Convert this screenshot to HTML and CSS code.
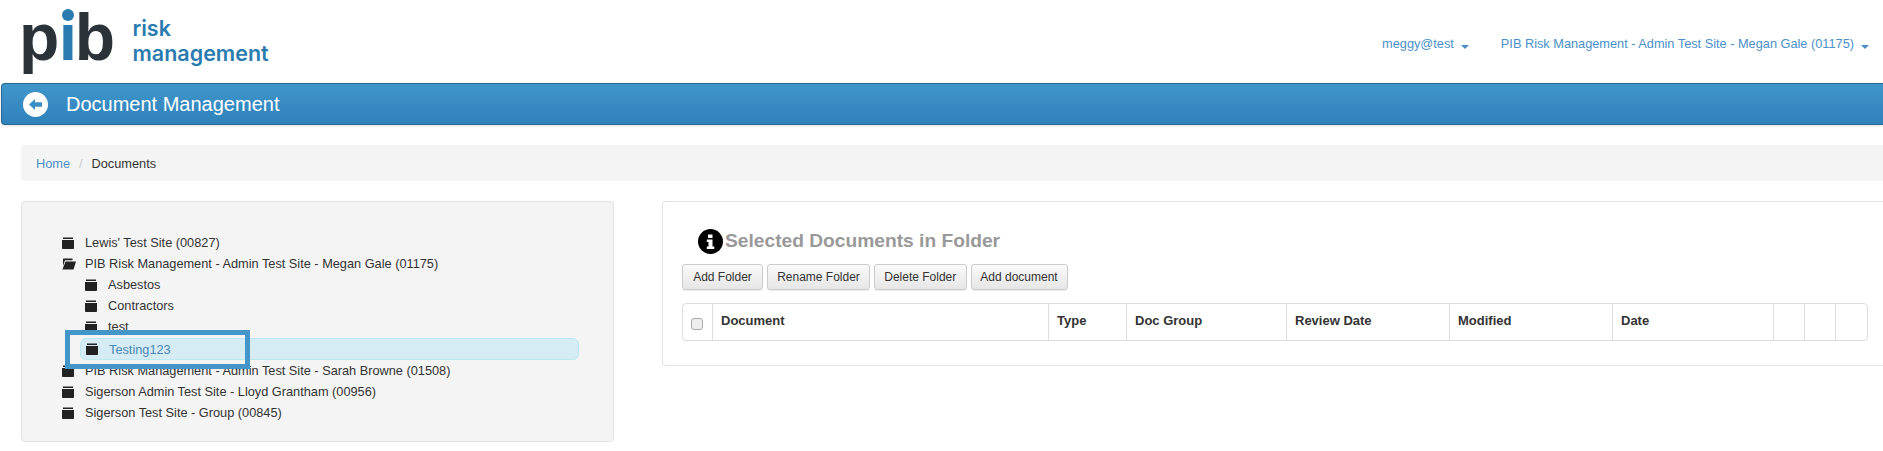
FILE: index.html
```html
<!DOCTYPE html>
<html lang="en">
<head>
<meta charset="utf-8">
<title>Document Management</title>
<link rel="stylesheet" href="styles.css">
</head>
<body>
<svg class="defs" width="0" height="0" aria-hidden="true">
  <symbol id="folder" viewBox="0 0 12 12"><path d="M1 0.5h10v1.6H1zM0 3h12v8.2a.8.8 0 0 1-.8.8H.8a.8.8 0 0 1-.8-.8z"/></symbol>
  <symbol id="folder-open" viewBox="0 0 14 12"><path d="M1.5 0.5h9v1.8H3L1 8V1z M3.6 3.4H14L11.5 11.5H0.4z"/></symbol>
</svg>
<header class="top">
  <div class="logo">
    <div class="logo-mark"><span class="logo-p">p</span><span class="logo-i">i</span><span>b</span></div>
    <div class="logo-text">risk<br>management</div>
  </div>
  <nav class="user-nav">
    <a class="nav-link">meggy@test<i class="caret"></i></a>
    <a class="nav-link">PIB Risk Management - Admin Test Site - Megan Gale (01175)<i class="caret"></i></a>
  </nav>
</header>
<div class="titlebar">
  <svg class="back" viewBox="0 0 25 25"><circle cx="12.5" cy="12.5" r="12.5" fill="#fff"/><path d="M6 12.5l6-5.5v3.2h7v4.6h-7V18z" fill="#3a8fc6"/></svg>
  <h1>Document Management</h1>
</div>
<ol class="crumbs">
  <li><a>Home</a></li>
  <li class="sep">/</li>
  <li>Documents</li>
</ol>
<main class="content">
  <section class="tree-panel">
    <ul class="tree">
      <li class="row"><svg class="ic"><use href="#folder"/></svg>Lewis' Test Site (00827)</li>
      <li class="row"><svg class="ic ic-open"><use href="#folder-open"/></svg>PIB Risk Management - Admin Test Site - Megan Gale (01175)</li>
      <li class="row child"><svg class="ic"><use href="#folder"/></svg>Asbestos</li>
      <li class="row child"><svg class="ic"><use href="#folder"/></svg>Contractors</li>
      <li class="row child"><svg class="ic"><use href="#folder"/></svg>test</li>
      <li class="row selected"><svg class="ic"><use href="#folder"/></svg>Testing123<span class="callout"></span></li>
      <li class="row"><svg class="ic"><use href="#folder"/></svg>PIB Risk Management - Admin Test Site - Sarah Browne (01508)</li>
      <li class="row"><svg class="ic"><use href="#folder"/></svg>Sigerson Admin Test Site - Lloyd Grantham (00956)</li>
      <li class="row"><svg class="ic"><use href="#folder"/></svg>Sigerson Test Site - Group (00845)</li>
    </ul>
  </section>
  <section class="docs-panel">
    <h2 class="docs-title">
      <svg class="info" viewBox="0 0 25 25"><circle cx="12.5" cy="12.5" r="12.5" fill="#000"/><path d="M10 5.5h4.5v3.5H10zM8.8 10.5h5.7v7h1.8v2.5H8.8v-2.5h1.7v-4.5H8.8z" fill="#fff"/></svg>
      Selected Documents in Folder
    </h2>
    <div class="actions">
      <button class="btn b1">Add Folder</button>
      <button class="btn b2">Rename Folder</button>
      <button class="btn b3">Delete Folder</button>
      <button class="btn b4">Add document</button>
    </div>
    <div class="table">
      <div class="cell c-check"><span class="check"></span></div>
      <div class="cell c-doc">Document</div>
      <div class="cell c-type">Type</div>
      <div class="cell c-group">Doc Group</div>
      <div class="cell c-review">Review Date</div>
      <div class="cell c-mod">Modified</div>
      <div class="cell c-date">Date</div>
      <div class="cell c-x"></div>
      <div class="cell c-x"></div>
      <div class="cell c-x"></div>
    </div>
  </section>
</main>
</body>
</html>
```
FILE: styles.css
```css
* { box-sizing: border-box; }
html, body { margin: 0; padding: 0; height: 451px; overflow: hidden; background: #fff; }
body { font-family: "Liberation Sans", Arial, sans-serif; font-size: 12.75px; color: #333; }
.defs { position: absolute; }

.top { height: 83px; display: flex; justify-content: space-between; }
.logo { display: flex; padding-left: 19px; }
.logo-mark { font-weight: 700; font-size: 66px; line-height: 74px; letter-spacing: -1.5px; color: #2b3338; height: 74px; }
.logo-p { letter-spacing: -0.5px; }
.logo-i { position: relative; letter-spacing: -2.5px; color: #2a7bb0; }
.logo-i::after { content: ""; position: absolute; left: 3.2px; top: 8.5px; width: 12px; height: 12px; border-radius: 50%; background: #2a7bb0; }
.logo-text { font-family: Inter, sans-serif; font-weight: 600; font-size: 21.5px; line-height: 25px; color: #2a7bb0; padding: 16px 0 0 19px; }
.user-nav { display: flex; gap: 32px; padding: 36px 14px 0 0; }
.nav-link { color: #4a90c8; }
.caret { display: inline-block; width: 0; height: 0; margin-left: 7px; border-top: 4px solid #4a90c8; border-left: 4px solid transparent; border-right: 4px solid transparent; vertical-align: -1px; }

.titlebar { height: 42px; margin-left: 1px; display: flex; align-items: center; padding-left: 21px; gap: 18px; border: 1px solid #2a6a92; border-right: 0; border-radius: 4px 0 0 4px; background: linear-gradient(#4096cb, #2f82ba); box-shadow: 0 1px 3px rgba(0,0,0,.12); }
.back { width: 25px; height: 25px; }
.titlebar h1 { margin: 0; font-size: 20px; font-weight: 400; color: #fff; }

.crumbs { list-style: none; height: 36px; margin: 20px 0 0 21px; padding: 0 0 0 15px; display: flex; align-items: center; gap: 9px; background: #f4f4f4; border-radius: 4px 0 0 4px; color: #333; }
.crumbs a { color: #4a90c8; }
.sep { color: #ccc; }

.content { display: flex; margin: 20px 0 0 21px; gap: 48px; align-items: flex-start; }
.tree-panel { width: 593px; height: 241px; padding: 30px 0 0 33px; background: #f4f4f4; border: 1px solid #e3e3e3; border-radius: 4px; }
.tree { list-style: none; margin: 0; padding: 0; width: 525px; }
.row { height: 21px; line-height: 21px; padding-left: 7px; display: flex; align-items: center; color: #333; white-space: nowrap; }
.child { padding-left: 30px; }
.ic { width: 12px; height: 12px; margin-right: 11px; fill: #222; flex: none; }
.ic-open { width: 14px; margin-right: 9px; }
.selected { position: relative; height: 22px; margin: 1px 0 0 25px; padding-left: 5px; width: 499px; background: #d6ecf5; border: 1px solid #bce8f1; border-radius: 6px; color: #4a87b5; }
.callout { position: absolute; left: -16px; top: -9px; width: 185px; height: 39px; border: 5px solid #4496c9; }

.docs-panel { flex: 1; height: 165px; padding: 23px 0 0 19px; background: #fff; border: 1px solid #e3e3e3; border-right: 0; border-radius: 4px 0 0 4px; }
.docs-title { display: flex; align-items: center; gap: 2px; margin: 0; padding-left: 16px; height: 32px; font-size: 19.2px; font-weight: 700; color: #999; }
.info { width: 25px; height: 25px; flex: none; }
.actions { display: flex; margin-top: 7px; height: 26px; gap: 4px; }
.btn { height: 26px; padding: 0; font: inherit; font-size: 12px; color: #333; background: linear-gradient(#fafafa, #e6e6e6); border: 1px solid #ccc; border-radius: 3px; box-shadow: 0 1px 1px rgba(0,0,0,.08); }
.b1 { width: 81px; }
.b2 { width: 103px; }
.b3 { width: 92.5px; }
.b4 { width: 97px; }
.table { display: flex; width: 1186px; height: 38px; margin-top: 13px; border: 1px solid #ddd; border-radius: 4px; font-size: 13px; font-weight: 700; color: #333; }
.cell { padding: 9px 0 0 8px; border-left: 1px solid #ddd; }
.c-check { width: 29px; border-left: 0; padding: 14px 0 0 8px; }
.check { display: block; width: 12px; height: 12px; background: #eee; border: 1px solid #aaa; border-radius: 3px; }
.c-doc { width: 336px; }
.c-type { width: 78px; }
.c-group { width: 160px; }
.c-review { width: 163px; }
.c-mod { width: 163px; }
.c-date { width: 161px; }
.c-x { width: 31px; }
```
